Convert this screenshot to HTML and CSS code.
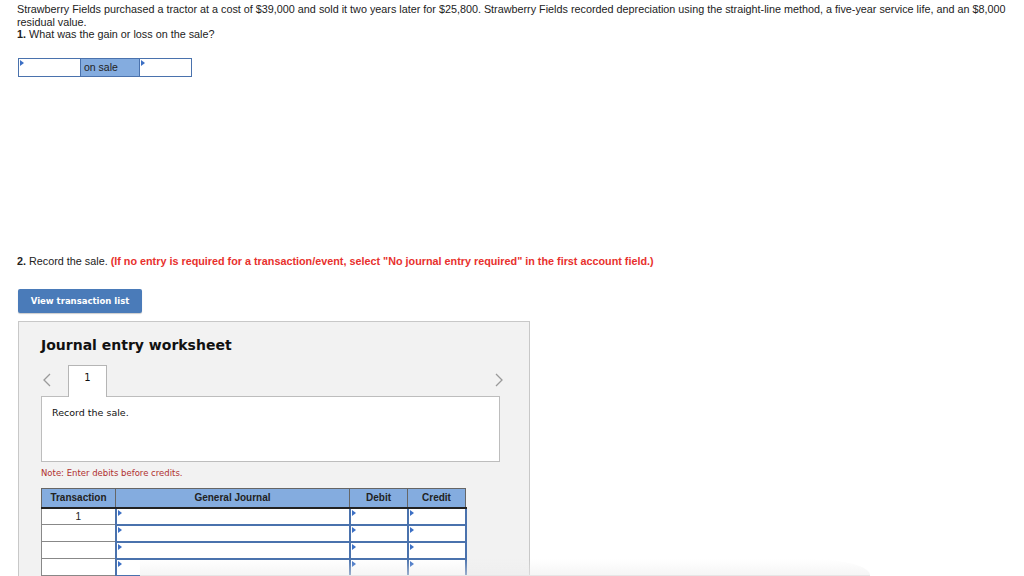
FILE: index.html
```html
<!DOCTYPE html>
<html lang="en">
<head>
    <meta charset="UTF-8">
    <title>Disposal of a tractor</title>
    <link rel="stylesheet" href="styles.css">
</head>
<body>
    <div class="question">
        <p>Strawberry Fields purchased a tractor at a cost of $39,000 and sold it two years later for $25,800. Strawberry Fields recorded depreciation using the straight-line method, a five-year service life, and an $8,000 residual value.</p>
        <p><b>1.</b> What was the gain or loss on the sale?</p>

        <div class="answer-box">
            <div class="cell drop"></div>
            <div class="cell label">on sale</div>
            <div class="cell drop last"></div>
        </div>

        <p class="part-two"><b>2.</b> Record the sale. <span class="warn">(If no entry is required for a transaction/event, select "No journal entry required" in the first account field.)</span></p>

        <button class="list-button">View transaction list</button>

        <div class="worksheet">
            <h2>Journal entry worksheet</h2>

            <div class="tabs">
                <svg class="arrow" width="10" height="14" viewBox="0 0 10 14"><path d="M8 1 L2 7 L8 13" fill="none" stroke="#9a9a9a" stroke-width="1.3"/></svg>
                <div class="tab">1</div>
                <svg class="arrow right" width="10" height="14" viewBox="0 0 10 14"><path d="M2 1 L8 7 L2 13" fill="none" stroke="#9a9a9a" stroke-width="1.3"/></svg>
            </div>

            <div class="tab-body">Record the sale.</div>

            <p class="note">Note: Enter debits before credits.</p>

            <table class="journal">
                <thead>
                    <tr>
                        <th class="col-tr">Transaction</th>
                        <th class="col-gj">General Journal</th>
                        <th class="col-amt">Debit</th>
                        <th class="col-amt">Credit</th>
                    </tr>
                </thead>
                <tbody>
                    <tr>
                        <td class="num">1</td>
                        <td class="drop"></td>
                        <td class="drop"></td>
                        <td class="drop"></td>
                    </tr>
                    <tr>
                        <td class="num"></td>
                        <td class="drop"></td>
                        <td class="drop"></td>
                        <td class="drop"></td>
                    </tr>
                    <tr>
                        <td class="num"></td>
                        <td class="drop"></td>
                        <td class="drop"></td>
                        <td class="drop"></td>
                    </tr>
                    <tr>
                        <td class="num"></td>
                        <td class="drop"></td>
                        <td class="drop"></td>
                        <td class="drop"></td>
                    </tr>
                </tbody>
            </table>
        </div>
    </div>

    <div class="bottom-fade"></div>
</body>
</html>
```

FILE: styles.css
```css
body {
    margin: 0;
    padding: 0;
    background: #fff;
    color: #222;
    font-family: "Liberation Sans", Arial, sans-serif;
    font-size: 10.8px;
    overflow: hidden;
}

.question {
    padding: 3px 8px 0 17px;
}

.question p {
    margin: 0;
    line-height: 12.5px;
}

/* Part 1 answer */
.answer-box {
    display: flex;
    width: 174px;
    height: 19px;
    margin: 17px 0 0 1px;
    border: 1px solid #4a72ad;
    box-sizing: border-box;
}

.answer-box .cell {
    width: 61px;
    position: relative;
}

.answer-box .last {
    flex: 1;
}

.answer-box .label {
    width: 60px;
    box-sizing: border-box;
    background: #84acdf;
    border-left: 1px solid #4a72ad;
    border-right: 1px solid #4a72ad;
    padding-left: 3px;
    line-height: 17px;
    font-size: 10.5px;
    color: #222;
}

.drop::before {
    content: "";
    position: absolute;
    left: 1px;
    top: 1px;
    border-left: 4px solid #3c6fc4;
    border-top: 3px solid transparent;
    border-bottom: 3px solid transparent;
}

/* Part 2 */
.part-two {
    margin-top: 178px !important;
}

.warn {
    color: #e8312d;
    font-weight: bold;
}

.list-button {
    display: block;
    margin: 22px 0 0 1px;
    width: 124px;
    height: 24px;
    border: none;
    border-radius: 2px;
    background: #4a7bb9;
    color: #fff;
    font-family: "DejaVu Sans", Verdana, sans-serif;
    font-size: 8.5px;
    font-weight: bold;
    box-shadow: 0 1px 1px rgba(0, 0, 0, 0.2);
}

.worksheet {
    width: 512px;
    height: 300px;
    margin: 8px 0 0 1px;
    padding: 0 30px 0 22px;
    box-sizing: border-box;
    background: #f2f2f2;
    border: 1px solid #c8c8c8;
    font-family: "DejaVu Sans", Verdana, sans-serif;
}

.worksheet h2 {
    margin: 15px 0 0 0;
    font-size: 14px;
    line-height: 17px;
    color: #111;
}

.tabs {
    display: flex;
    align-items: flex-end;
    margin-top: 10px;
    height: 32px;
}

.arrow {
    align-self: center;
    margin: 0 16px 0 1px;
}

.arrow.right {
    margin: 0 -5px 0 auto;
}

.tab {
    width: 39px;
    height: 32px;
    box-sizing: border-box;
    background: #fff;
    border: 1px solid #b5b5b5;
    border-bottom: none;
    text-align: center;
    font-size: 10px;
    line-height: 24px;
    color: #111;
    margin-bottom: -1px;
    position: relative;
}

.tab-body {
    width: 459px;
    height: 66px;
    box-sizing: border-box;
    background: #fff;
    border: 1px solid #bdbdbd;
    padding: 10px 10px;
    font-size: 9.5px;
    color: #111;
}

.note {
    margin: 5px 0 0 0 !important;
    font-size: 8.5px;
    color: #b03030;
}

.journal {
    border-collapse: collapse;
    margin-top: 8px;
    font-family: "Liberation Sans", Arial, sans-serif;
    font-size: 10px;
}

.journal th {
    height: 18px;
    padding: 0;
    background: #84acdf;
    color: #222;
    border: 1px solid #666;
    border-bottom: 2px solid #222;
    font-weight: bold;
}

.col-tr { width: 73px; }
.col-gj { width: 233px; }
.col-amt { width: 57px; }

.journal td {
    height: 15px;
    padding: 0;
    background: #fff;
    border: 1px solid #888;
    position: relative;
}

.journal td.drop {
    border: 2px solid #4a72ad;
    border-top-width: 1px;
    border-bottom-width: 2px;
}

.journal td.num {
    text-align: center;
    color: #222;
}

.bottom-fade {
    position: fixed;
    left: 140px;
    bottom: 0;
    width: 730px;
    height: 16px;
    background: linear-gradient(to bottom, rgba(240, 240, 240, 0), rgba(236, 236, 236, 0.5));
    border-bottom: 1px solid #e6e6e6;
    border-top-right-radius: 60px 16px;
}
```
